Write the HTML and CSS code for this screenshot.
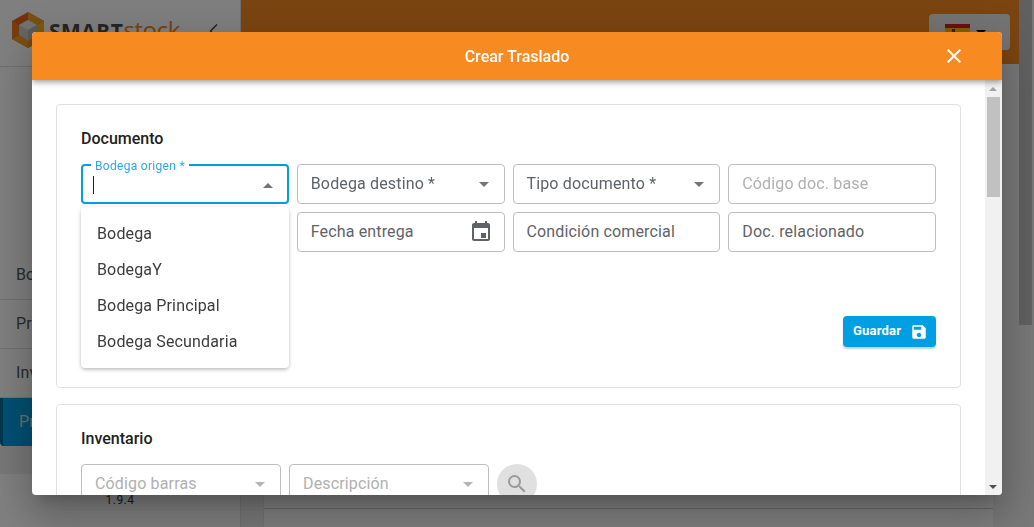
FILE: index.html
```html
<!DOCTYPE html>
<html lang="es">
<head>
<meta charset="utf-8">
<title>Crear Traslado</title>
<link rel="stylesheet" href="styles.css">
</head>
<body>
<div class="app">
  <aside class="sidebar">
    <div class="brand">
      <svg class="logo" viewBox="0 0 34 36" width="34" height="36">
        <polygon points="17,0 33,9 33,27 17,36 1,27 1,9" fill="#e8641e"/>
        <polygon points="17,0 33,9 25,13 17,8" fill="#f0a020"/>
        <polygon points="33,9 33,27 26,23 26,13" fill="#f7b41c"/>
        <polygon points="33,27 17,36 17,29 26,23" fill="#f08a20"/>
        <polygon points="1,27 17,36 17,29 8,23" fill="#f5a01e"/>
        <polygon points="1,9 1,27 8,23 8,13" fill="#ef7d1f"/>
        <polygon points="17,8 26,13 26,23 17,29 8,23 8,13" fill="#c9c9c9"/>
        <polygon points="17,8 26,13 17,18 8,13" fill="#e4e4e4"/>
        <polygon points="17,18 26,13 26,23 17,29" fill="#b4b4b4"/>
      </svg>
      <span class="brand-name"><b>SMART</b><span class="brand-stock">stock</span></span>
      <svg class="chev" viewBox="0 0 24 24" width="24" height="24"><path d="M15 6.5 8.5 13l6.5 6.5" fill="none" stroke="#333" stroke-width="1.3"/></svg>
    </div>
    <nav class="nav">
      <a class="nav-item">Bodegas</a>
      <a class="nav-item">Productos</a>
      <a class="nav-item">Inventario</a>
      <a class="nav-item nav-active">Procesos</a>
    </nav>
    <div class="nav-tail"></div>
    <div class="version">1.9.4</div>
  </aside>
  <div class="main">
    <header class="topbar">
      <button class="lang">
        <span class="flag"><i class="flag-red"></i><i class="flag-yellow"><i class="flag-arms"></i></i></span>
        <span class="lang-caret"></span>
      </button>
    </header>
    <div class="content"><div class="sheet"><div class="sheet-line"></div></div></div>
  </div>
  <div class="page-scroll"><div class="page-thumb"></div></div>
</div>

<div class="backdrop"></div>

<section class="dialog">
  <header class="dialog-head">
    <h1 class="dialog-title">Crear Traslado</h1>
    <svg class="dialog-close" viewBox="0 0 24 24" width="24" height="24"><path d="M19 6.4 17.6 5 12 10.6 6.4 5 5 6.4 10.6 12 5 17.6 6.4 19 12 13.4 17.6 19 19 17.6 13.4 12z" fill="#fff"/></svg>
  </header>
  <div class="dialog-wrap">
    <div class="dialog-body">
      <div class="card card-doc">
        <h2 class="card-title">Documento</h2>
        <div class="fields">
          <div class="field field-focus">
            <span class="float-label">Bodega origen *</span>
            <span class="cursor"></span>
            <span class="arrow arrow-up"></span>
          </div>
          <div class="field"><span class="ph">Bodega destino *</span><span class="arrow"></span></div>
          <div class="field"><span class="ph">Tipo documento *</span><span class="arrow"></span></div>
          <div class="field"><span class="ph ph-light">Código doc. base</span></div>
          <div class="field-spacer"></div>
          <div class="field"><span class="ph">Fecha entrega</span>
            <svg class="cal" viewBox="0 0 24 24" width="24" height="24"><path d="M19 3h-1V1h-2v2H8V1H6v2H5c-1.1 0-2 .9-2 2v14c0 1.1.9 2 2 2h14c1.1 0 2-.9 2-2V5c0-1.1-.9-2-2-2zm0 16H5V8h14v11zM12 13h5v5h-5z" fill="#5f6368"/></svg>
          </div>
          <div class="field"><span class="ph">Condición comercial</span></div>
          <div class="field"><span class="ph">Doc. relacionado</span></div>
        </div>
        <div class="actions">
          <button class="btn-save"><span class="btn-label">Guardar</span>
            <svg viewBox="0 0 24 24" width="18" height="18"><path d="M17 3H5c-1.11 0-2 .9-2 2v14c0 1.1.89 2 2 2h14c1.1 0 2-.9 2-2V7l-4-4zm-5 16c-1.66 0-3-1.34-3-3s1.34-3 3-3 3 1.34 3 3-1.34 3-3 3zm3-10H5V5h10v4z" fill="#fff"/></svg>
          </button>
        </div>
        <ul class="menu">
          <li>Bodega</li>
          <li>BodegaY</li>
          <li>Bodega Principal</li>
          <li>Bodega Secundaria</li>
        </ul>
      </div>
      <div class="card">
        <h2 class="card-title">Inventario</h2>
        <div class="inv-row">
          <div class="field field-inv"><span class="ph ph-light">Código barras</span><span class="arrow arrow-light"></span></div>
          <div class="field field-inv"><span class="ph ph-light">Descripción</span><span class="arrow arrow-light"></span></div>
          <button class="search">
            <svg viewBox="0 0 24 24" width="24" height="24"><path d="M15.5 14h-.79l-.28-.27A6.471 6.471 0 0 0 16 9.5 6.5 6.5 0 1 0 9.5 16c1.61 0 3.09-.59 4.23-1.57l.27.28v.79l5 4.99L20.49 19l-4.99-5zm-6 0C7.01 14 5 11.99 5 9.5S7.01 5 9.5 5 14 7.01 14 9.5 11.99 14 9.5 14z" fill="#9a9a9a"/></svg>
          </button>
        </div>
      </div>
    </div>
    <div class="vscroll">
      <span class="vs-up"></span>
      <span class="vs-thumb"></span>
      <span class="vs-down"></span>
    </div>
  </div>
</section>
</body>
</html>
```
FILE: styles.css
```css
* { box-sizing: border-box; }
html, body { margin: 0; height: 100%; overflow: hidden; }
body { font-family: Roboto, "Liberation Sans", sans-serif; color: #212121; background: #fff; }

.app { display: flex; height: 527px; }
.sidebar { width: 241px; flex: none; background: #fff; border-right: 1px solid #e0e0e0; display: flex; flex-direction: column; }
.brand { height: 67px; flex: none; display: flex; align-items: flex-start; padding: 12px 0 0 11px; border-bottom: 1px solid #ddd; }
.logo { flex: none; }
.brand-name { font-family: "Open Sans", sans-serif; font-size: 24px; line-height: 36px; margin-left: 4px; color: #555; white-space: nowrap; width: 150px; }
.brand-name b { font-size: 21px; letter-spacing: .5px; font-weight: 700; color: #4a4a4a; }
.brand-stock { color: #f0841e; font-weight: 400; letter-spacing: -.4px; }
.chev { margin: 6px 0 0 3px; }
.nav { margin-top: 184px; display: flex; flex-direction: column; }
.nav-item { height: 49px; padding: 14px 16px 0; font-size: 16px; line-height: 20px; letter-spacing: .15px; color: #555; border-bottom: 1px solid #ddd; }
.nav-active { height: 48px; padding-left: 16px; background: #00a0e3; border-left: 3px solid #006c9c; border-bottom: 0; border-radius: 0 0 0 4px; color: #ddd; }
.nav-tail { height: 28px; background: #eee; }
.version { font-size: 12px; line-height: 14px; letter-spacing: .5px; text-align: center; margin: 19px 0 0 0; color: #333; font-weight: 400; }

.main { flex: 1; min-width: 0; background: #f0f0f0; display: flex; flex-direction: column; }
.topbar { height: 64px; flex: none; background: #f78a21; display: flex; justify-content: flex-end; padding: 14px 9px 0 0; }
.lang { width: 81px; height: 36px; border: 0; border-radius: 4px; background: #e8e8e8; display: flex; align-items: flex-start; padding: 10px 0 0 16px; }
.flag { width: 25px; display: block; }
.flag i { display: block; }
.flag-red { height: 4px; background: #d32020; }
.flag-yellow { height: 11px; background: #ffc400; position: relative; }
.flag .flag-arms { position: absolute; left: 7px; top: 1px; width: 3px; height: 4px; background: #7a3a10; }
.lang-caret { width: 0; height: 0; margin: 6px 0 0 6px; border-left: 5px solid transparent; border-right: 5px solid transparent; border-top: 5px solid #000; }
.content { flex: 1; padding: 0 0 0 22px; display: flex; align-items: flex-end; }
.sheet { width: 730px; height: 150px; background: #fff; border-left: 1px solid #e6e6e6; display: flex; align-items: flex-end; }
.sheet-line { flex: 1; height: 19px; border-top: 1px solid #ccc; }
.page-scroll { width: 15px; flex: none; background: #f1f1f1; }
.page-thumb { height: 325px; margin: 0 2px 0 0; background: #c1c1c1; }

.backdrop { position: fixed; inset: 0; background: rgba(0,0,0,.5); }

.dialog { position: fixed; left: 32px; top: 32px; width: 970px; height: 463px; background: #fff; border-radius: 4px; overflow: hidden; display: flex; flex-direction: column;
  box-shadow: 0 11px 15px -7px rgba(0,0,0,.2), 0 24px 38px 3px rgba(0,0,0,.14), 0 9px 46px 8px rgba(0,0,0,.12); }
.dialog-head { height: 48px; flex: none; background: #f78a21; display: flex; align-items: center; justify-content: center; position: relative; z-index: 2; box-shadow: 0 2px 4px -1px rgba(0,0,0,.2), 0 4px 5px rgba(0,0,0,.14), 0 1px 10px rgba(0,0,0,.12); }
.dialog-title { margin: 2px 0 0; font-size: 16px; font-weight: 500; color: #fff; line-height: 48px; }
.dialog-close { position: absolute; right: 36px; top: 12px; }
.dialog-wrap { flex: 1; min-height: 0; display: flex; }
.dialog-body { flex: 1; min-width: 0; overflow: hidden; padding: 24px 24px 0; }

.vscroll { width: 17px; flex: none; background: #f1f1f1; position: relative; }
.vs-up, .vs-down { position: absolute; left: 4px; width: 0; height: 0; border-left: 4px solid transparent; border-right: 4px solid transparent; }
.vs-up { top: 7px; border-bottom: 4px solid #a3a3a3; }
.vs-down { bottom: 6px; border-top: 4px solid #505050; }
.vs-thumb { position: absolute; left: 2px; right: 2px; top: 17px; height: 100px; background: #c1c1c1; }

.card { position: relative; border: 1px solid #e0e0e0; border-radius: 4px; padding: 24px; background: #fff; }
.card-doc { height: 284px; margin-bottom: 16px; }
.card-title { margin: 0 0 15px; font-size: 16px; font-weight: 500; line-height: 20px; color: #212121; }

.fields { display: grid; grid-template-columns: repeat(4, 1fr); gap: 8px; }
.field { position: relative; height: 40px; border: 1px solid #bdbdbd; border-radius: 4px; padding: 0 13px; display: flex; align-items: center; justify-content: space-between; background: #fff; }
.ph { font-size: 16px; letter-spacing: .15px; color: #5f6368; white-space: nowrap; margin-bottom: 2px; }
.ph-light { color: #b0b0b0; }
.arrow { flex: none; width: 0; height: 0; margin-right: 2px; border-left: 5px solid transparent; border-right: 5px solid transparent; border-top: 5px solid #757575; }
.arrow-up { position: absolute; right: 14px; top: 17px; margin: 0; border-top: 0; border-bottom: 5px solid #757575; }
.arrow-light { border-top-color: #b5b5b5; }
.field-focus { border: 2px solid #009fe3; }
.float-label { position: absolute; left: 8px; top: -7px; padding: 0 4px; background: #fff; font-size: 12px; line-height: 14px; letter-spacing: .3px; color: #2aa9e6; white-space: nowrap; }
.cursor { position: absolute; left: 10px; top: 10px; width: 1px; height: 18px; background: #212121; }
.cal { flex: none; margin-right: -2px; }

.actions { display: flex; justify-content: flex-end; margin-top: 64px; }
.btn-save { display: flex; align-items: center; gap: 9px; height: 31px; width: 93px; padding: 0 0 0 10px; border: 0; border-radius: 4px; background: #009fe3; color: #fff; font: 700 13px Roboto, sans-serif; letter-spacing: .2px; box-shadow: 0 2px 2px rgba(0,0,0,.2); }
.btn-label { margin-bottom: 2px; }

.menu { position: absolute; left: 24px; top: 102px; width: 208px; height: 161px; margin: 0; padding: 9px 0 0; list-style: none; background: #fff; border-radius: 4px; box-shadow: 0 2px 4px -1px rgba(0,0,0,.25), 0 1px 5px rgba(0,0,0,.12); }
.menu li { height: 36px; line-height: 36px; padding-left: 16px; font-size: 16px; letter-spacing: .15px; color: #3c3c3c; }

.inv-row { display: flex; gap: 8px; }
.field-inv { width: 200px; }
.search { width: 40px; height: 40px; border: 0; border-radius: 50%; background: #e0e0e0; padding: 0; display: flex; align-items: center; justify-content: center; }
```
